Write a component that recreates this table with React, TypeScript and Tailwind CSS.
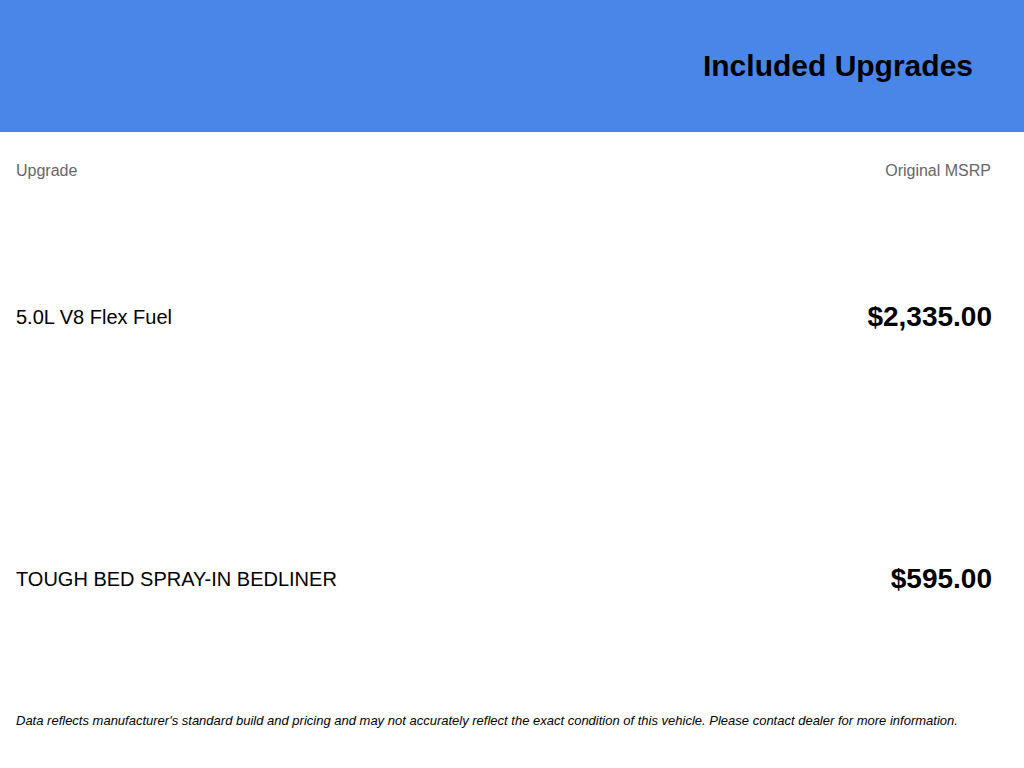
import React from 'react';

const upgrades = [
  { name: '5.0L V8 Flex Fuel', price: '$2,335.00' },
  { name: 'TOUGH BED SPRAY-IN BEDLINER', price: '$595.00' },
];

const App = () => {
  return (
    <div className="min-h-screen bg-white font-['Liberation_Sans',Arial,sans-serif] text-black">
      <header className="h-[132px] bg-[#4a86e8] flex items-center justify-end pr-[51px]">
        <h1 className="text-[30px] font-bold leading-none">Included Upgrades</h1>
      </header>
      <div className="pl-4 pr-[33px]">
        <div className="flex justify-between pt-[29px] pb-[5px] text-base leading-5 text-[#666666]">
          <span>Upgrade</span>
          <span>Original MSRP</span>
        </div>
        {upgrades.map((item) => (
          <div key={item.name} className="h-[262px] flex items-center justify-between">
            <span className="text-[20px]">{item.name}</span>
            <span className="text-[28px] font-bold -mr-px">{item.price}</span>
          </div>
        ))}
        <p className="mt-px text-[13px] leading-5 italic">
          Data reflects manufacturer's standard build and pricing and may not accurately reflect the exact condition of this vehicle. Please contact dealer for more information.
        </p>
      </div>
    </div>
  );
};

export default App;
